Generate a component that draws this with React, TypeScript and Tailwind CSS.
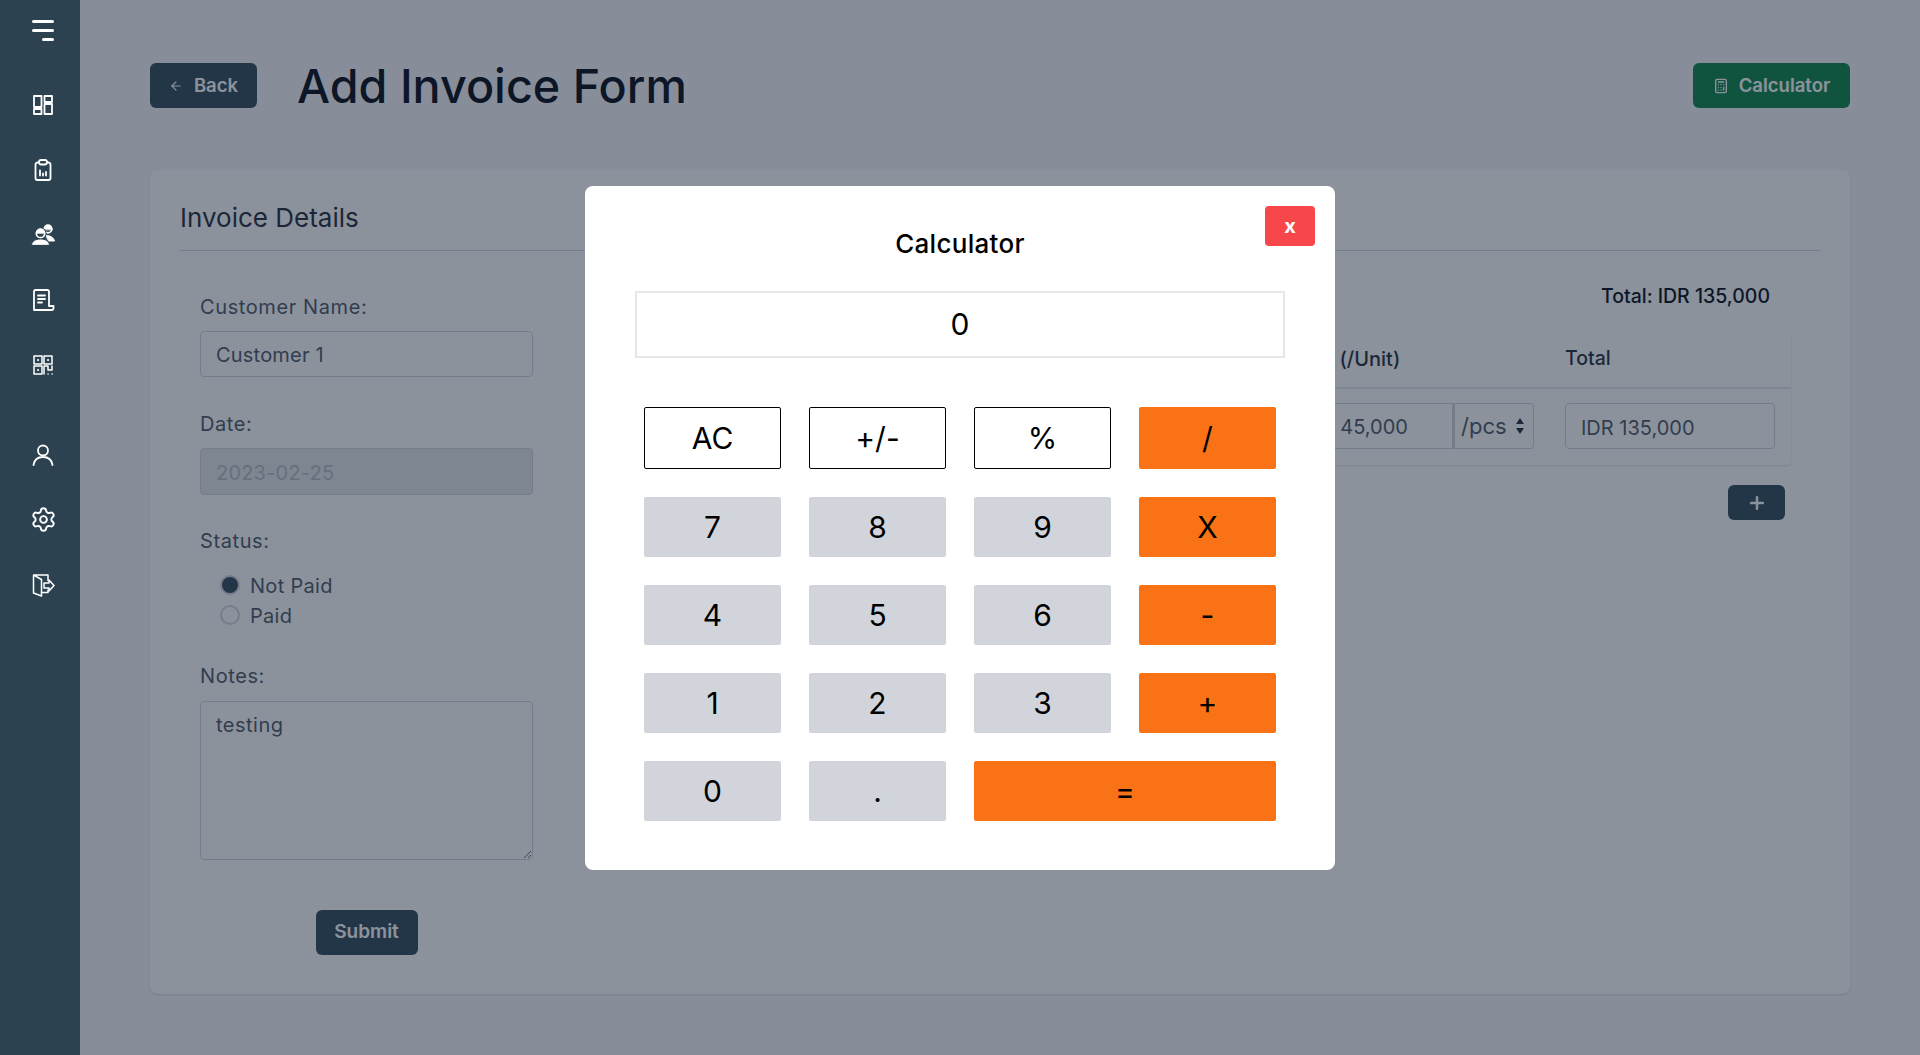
import React from 'react';
import { ArrowLeft, Calculator, Plus, Settings } from 'lucide-react';

const font = { fontFamily: 'Inter, "Noto Sans", sans-serif' };

const SideIcon: React.FC<{ children: React.ReactNode }> = ({ children }) => (
  <div className="h-[65px] flex items-center justify-center">
    <svg width="24" height="24" viewBox="0 0 24 24" fill="none" stroke="#ffffff" strokeWidth="1.8" strokeLinejoin="round" strokeLinecap="round">
      {children}
    </svg>
  </div>
);

const Sidebar: React.FC = () => (
  <aside className="relative z-10 w-20 shrink-0 min-h-screen bg-[#2c4251] flex flex-col items-center pl-[6px] pt-[20px]">
    <div className="flex flex-col items-end gap-[6px] w-[22px] mb-[31px]">
      <span className="h-[3px] w-full rounded bg-white" />
      <span className="h-[3px] w-full rounded bg-white" />
      <span className="h-[3px] w-[12px] rounded bg-white" />
    </div>
    <SideIcon>
      <rect x="3" y="3" width="7.500" height="11" />
      <rect x="13.500" y="3" width="7.500" height="6" />
      <rect x="3" y="16" width="7.500" height="5" />
      <rect x="13.500" y="11" width="7.500" height="10" />
    </SideIcon>
    <SideIcon>
      <path d="M8 4.500H6.500a2 2 0 0 0-2 2V20a2 2 0 0 0 2 2h11a2 2 0 0 0 2-2V6.500a2 2 0 0 0-2-2H16" />
      <rect x="8" y="2" width="8" height="4.500" rx="2.200" />
      <path d="M9 17.500v-5M12 17.500v-2M15 17.500v-3.500" />
    </SideIcon>
    <SideIcon>
      <circle cx="17" cy="6" r="3.800" strokeWidth="1.700" />
      <path d="M13 6.500a4 4 0 0 1 8 0z" fill="#ffffff" strokeWidth="0.800" />
      <path d="M15 12.500c4 0 7.500 1.500 8.500 5.500H18z" fill="#ffffff" strokeWidth="1" />
      <circle cx="9.500" cy="10.500" r="6" fill="#2c4251" stroke="none" />
      <circle cx="9.500" cy="10.500" r="4.200" strokeWidth="1.700" />
      <path d="M5.300 10a4.200 4.200 0 0 1 8.400 0z" fill="#ffffff" strokeWidth="0.800" />
      <path d="M0.500 22c.5-4 4-6 9-6s8.500 2 9 6z" fill="#ffffff" stroke="#2c4251" strokeWidth="1" />
    </SideIcon>
    <SideIcon>
      <path d="M18 18V3.500A1.500 1.500 0 0 0 16.500 2h-12A1.500 1.500 0 0 0 3 3.500V22h17.500a2 2 0 0 0 2-2v-2H18z" />
      <path d="M7 7.500h7M7 11h7M7 14.500h4" />
    </SideIcon>
    <SideIcon>
      <g strokeWidth="1.500">
        <rect x="3" y="3" width="8" height="8" />
        <rect x="13" y="3" width="8" height="8" />
        <rect x="3" y="13" width="8" height="8" />
        <path d="M7 7h.1M17 7h.1M7 17h.1" strokeWidth="2" />
        <path d="M13 21v-8h4v4h4v-4M17 21h.1M21 21h.1" />
      </g>
    </SideIcon>
    <div className="h-[25px]" />
    <SideIcon>
      <circle cx="12" cy="7.500" r="5" />
      <path d="M2.500 22c.8-5 4.500-8 9.500-8s8.700 3 9.500 8" />
    </SideIcon>
    <div className="h-[65px] flex items-center justify-center">
      <Settings size={27} color="#ffffff" strokeWidth={1.7} />
    </div>
    <SideIcon>
      <g strokeWidth="1.500">
        <path d="M17 7.500V2H2.500v18l8 3V6.500l-8-4.500" />
        <path d="M10.500 19.500H17V17" />
        <path d="M13 10h5V7l5 5.500-5 5.500v-3h-5z" />
      </g>
    </SideIcon>
  </aside>
);

const labelCls = 'block h-[30px] text-[20px] tracking-[0.6px] leading-[32px] text-[#4b5563]';
const inputCls = 'block w-full rounded-[4px] border border-[#d1d5db] px-[15px] pt-[2px] text-[20px] tracking-[0.2px] outline-none';

const InvoiceForm: React.FC = () => (
  <form className="w-[333px] ml-[20px] shrink-0 pt-[40px]">
    <label className={labelCls}>Customer Name:</label>
    <input className={`${inputCls} h-[46px] mt-[10px] bg-white text-[#4b5563]`} defaultValue="Customer 1" readOnly />

    <label className={`${labelCls} mt-[31px]`}>Date:</label>
    <input className={`${inputCls} h-[47px] mt-[10px] bg-[#e5e7eb] text-[#b5b9c2]`} defaultValue="2023-02-25" disabled />

    <label className={`${labelCls} mt-[30px]`}>Status:</label>
    <div className="mt-[15px] pl-[20px] text-[20px] tracking-[0.3px] text-[#4b5563]">
      <div className="flex items-center h-[30px] gap-[10px]">
        <span className="size-[20px] rounded-full bg-[#2f4757] border-2 border-[#d1d5db]" />
        <span className="pt-[2px]">Not Paid</span>
      </div>
      <div className="flex items-center h-[30px] gap-[10px]">
        <span className="size-[20px] rounded-full border-2 border-[#d1d5db]" />
        <span className="pt-[2px]">Paid</span>
      </div>
    </div>

    <label className={`${labelCls} mt-[30px]`}>Notes:</label>
    <textarea className={`${inputCls} h-[159px] mt-[11px] pt-[8px] bg-white text-[#4b5563] tracking-[0.5px]`} defaultValue="testing" readOnly />

    <div className="flex justify-center mt-[50px]">
      <button type="button" className="w-[102px] h-[45px] rounded-[6px] bg-[#2f4757] text-white text-[19px] font-semibold">
        Submit
      </button>
    </div>
  </form>
);

const cols = 'grid grid-cols-[1fr_283px_226px]';

const ItemsPanel: React.FC = () => (
  <div className="ml-auto w-[1190px] mr-[29px] pt-[30px]">
    <p className="h-[30px] mr-[21px] text-right text-[19.500px] leading-[30px] font-medium text-[#030712]">Total: IDR 135,000</p>
    <div className="mt-[20px] rounded-[4px] shadow-sm">
      <div className={`${cols} h-[58px] items-center border-b-2 border-[#e5e7eb] text-[20px] font-medium text-[#1f2937]`}>
        <span />
        <span className="pl-[3px]">Price (/Unit)</span>
        <span className="text-[19.500px]">Total</span>
      </div>
      <div className={`${cols} h-[76px] items-start pt-[14px] text-[#4b5563]`}>
        <span />
        <div className="pr-[31px] flex h-[46px] text-[20px]">
          <div className="w-[171px] rounded-l-[4px] border border-[#d1d5db] pl-[19px] leading-[47px]">IDR 45,000</div>
          <div className="w-[81px] flex items-center justify-between rounded-r-[4px] border border-l-2 border-[#d1d5db] pl-[6px] pr-[8px] text-[22px]">
            <span>/pcs</span>
            <svg width="10" height="18" viewBox="0 0 10 18" fill="#1f2937"><path d="M5 1l4 6H1zM5 17l-4-6h8z" /></svg>
          </div>
        </div>
        <div className="pr-[16px]"><div className={`${inputCls} h-[46px] leading-[44px] text-[19.500px] tracking-normal`}>IDR 135,000</div></div>
      </div>
    </div>
    <div className="flex justify-end mt-[20px] mr-[6px]">
      <button type="button" className="w-[57px] h-[35px] rounded-[6px] bg-[#2f4757] text-white flex items-center justify-center">
        <Plus size={20} strokeWidth={3} />
      </button>
    </div>
  </div>
);

const Key: React.FC<{ label: string; kind?: 'plain' | 'num' | 'op'; wide?: boolean }> = ({ label, kind = 'num', wide }) => {
  let cls = 'bg-[#d1d5db]';
  if (kind === 'plain') cls = 'bg-white border border-black';
  if (kind === 'op') cls = 'bg-[#f97316]';
  return (
    <button type="button" className={`${cls} ${wide ? 'col-span-2' : ''} rounded-[2px] text-[30px] text-black`}>
      {label}
    </button>
  );
};

const CalculatorModal: React.FC = () => (
  <div className="fixed inset-0 flex items-center justify-center bg-[#172539]/50">
    <div className="relative w-[750px] h-[684px] mt-[1px] rounded-[8px] bg-white px-[50px] pt-[39px]">
      <button type="button" className="absolute top-[20px] right-[20px] w-[50px] h-[40px] rounded-[4px] bg-[#f8474b] text-white text-[20px] font-bold">
        x
      </button>
      <h2 className="text-center text-[26px] tracking-[0.3px] leading-[38px] font-medium text-black">Calculator</h2>
      <div className="mt-[28px] h-[67px] border-2 border-[#e5e7eb] flex items-center justify-center text-[30px] text-black">0</div>
      <div className="mt-[49px] mx-[9px] grid grid-cols-4 gap-[28px] grid-rows-[62px_60px_60px_60px_60px]">
        <Key label="AC" kind="plain" />
        <Key label="+/-" kind="plain" />
        <Key label="%" kind="plain" />
        <Key label="/" kind="op" />
        <Key label="7" />
        <Key label="8" />
        <Key label="9" />
        <Key label="X" kind="op" />
        <Key label="4" />
        <Key label="5" />
        <Key label="6" />
        <Key label="-" kind="op" />
        <Key label="1" />
        <Key label="2" />
        <Key label="3" />
        <Key label="+" kind="op" />
        <Key label="0" />
        <Key label="." />
        <Key label="=" kind="op" wide />
      </div>
    </div>
  </div>
);

export default function App() {
  return (
    <div className="flex min-h-screen bg-[#f7f7fa]" style={font}>
      <Sidebar />
      <main className="flex-1 px-[70px] pt-[63px]">
        <header className="flex items-center h-[45px]">
          <button type="button" className="w-[107px] h-[45px] rounded-[6px] bg-[#2f4757] text-white text-[18.500px] font-semibold flex items-center justify-center gap-[11px]">
            <ArrowLeft size={14} />
            Back
          </button>
          <h1 className="ml-[40px] text-[46.700px] leading-[54px] font-medium text-[#030712]">Add Invoice Form</h1>
          <button type="button" className="ml-auto w-[157px] h-[45px] rounded-[6px] bg-[#098347] text-white text-[18.500px] font-semibold flex items-center justify-center gap-[10px]">
            <Calculator size={16} />
            Calculator
          </button>
        </header>
        <section className="mt-[62px] h-[824px] rounded-[8px] bg-white shadow-sm px-[30px] pt-[31px]">
          <h3 className="h-[50px] border-b border-[#d1d5db] text-[26px] leading-[34px] text-[#1f2937]">Invoice Details</h3>
          <div className="flex">
            <InvoiceForm />
            <ItemsPanel />
          </div>
        </section>
      </main>
      <CalculatorModal />
    </div>
  );
}
